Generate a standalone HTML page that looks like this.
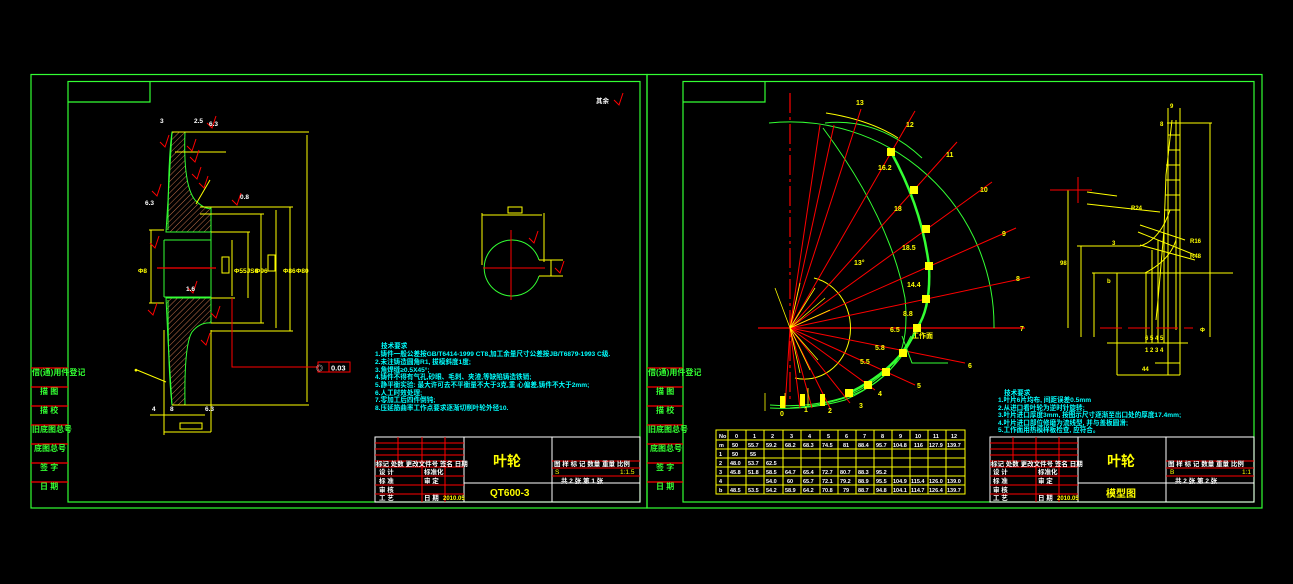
<!DOCTYPE html>
<html><head><meta charset="utf-8"><style>
html,body{margin:0;padding:0;background:#000;width:1293px;height:584px;overflow:hidden}
svg{display:block}
text{font-family:"Liberation Sans","Noto Sans CJK SC",sans-serif}
</style></head><body>
<svg width="1293" height="584" viewBox="0 0 1293 584" xmlns="http://www.w3.org/2000/svg">
<defs>
<pattern id="h" width="4" height="4" patternUnits="userSpaceOnUse" patternTransform="rotate(45)"><line x1="0" y1="0" x2="0" y2="4" stroke="#c0704a" stroke-width="1"/></pattern>
</defs>
<rect width="1293" height="584" fill="#000"/>
<g fill="none" stroke="#3f3" stroke-width="1.2">
<rect x="31" y="74.5" width="616" height="433.5"/>
<rect x="68" y="81.5" width="572" height="420.5"/>
<polyline points="68,102 150,102 150,81.5"/>
<rect x="647" y="74.5" width="615" height="433.5"/>
<rect x="683" y="81.5" width="571" height="420.5"/>
<polyline points="683,102 765,102 765,81.5"/>
</g>
<g stroke="#f00" stroke-width="1.2">
<line x1="31" y1="368" x2="68" y2="368"/><line x1="31" y1="387" x2="68" y2="387"/><line x1="31" y1="406" x2="68" y2="406"/><line x1="31" y1="425" x2="68" y2="425"/><line x1="31" y1="444" x2="68" y2="444"/><line x1="31" y1="463" x2="68" y2="463"/><line x1="31" y1="482" x2="68" y2="482"/>
<line x1="647" y1="368" x2="683" y2="368"/><line x1="647" y1="387" x2="683" y2="387"/><line x1="647" y1="406" x2="683" y2="406"/><line x1="647" y1="425" x2="683" y2="425"/><line x1="647" y1="444" x2="683" y2="444"/><line x1="647" y1="463" x2="683" y2="463"/><line x1="647" y1="482" x2="683" y2="482"/>
</g>
<g fill="#3f3" font-size="8" font-weight="bold">
<text x="32" y="375">借(通)用件登记</text><text x="40" y="394">描 图</text><text x="40" y="413">描 校</text><text x="32" y="432">旧底图总号</text><text x="34" y="451">底图总号</text><text x="40" y="470">签 字</text><text x="40" y="489">日 期</text>
<text x="648" y="375">借(通)用件登记</text><text x="656" y="394">描 图</text><text x="656" y="413">描 校</text><text x="648" y="432">旧底图总号</text><text x="650" y="451">底图总号</text><text x="656" y="470">签 字</text><text x="656" y="489">日 期</text>
</g>

<path d="M172,132 L185,132 Q183,185 195,200 Q205,210 211,208 L211,232 L166,232 L168,200 Z" fill="url(#h)" stroke="#3f3"/>
<path d="M166,298 L211,298 L211,323 Q200,322 192,332 Q184,345 185,405 L172,405 L168,340 Z" fill="url(#h)" stroke="#3f3"/>
<g fill="none" stroke="#3f3" stroke-width="1">
<line x1="164" y1="240" x2="164" y2="297"/><line x1="211" y1="232" x2="211" y2="298"/>
<line x1="164" y1="240" x2="211" y2="240"/><line x1="164" y1="297" x2="211" y2="297"/>
<path d="M172,132 Q168,160 168,230"/><path d="M172,405 Q168,370 168,300"/>
</g>
<g stroke="#ff0" stroke-width="1" fill="none">
<line x1="172" y1="132" x2="309" y2="132"/><line x1="172" y1="405" x2="309" y2="405"/><line x1="307" y1="135" x2="307" y2="402"/>
<line x1="175" y1="152" x2="226" y2="152"/>
<line x1="200" y1="207" x2="293" y2="207"/><line x1="200" y1="214" x2="264" y2="214"/><line x1="211" y1="232" x2="250" y2="232"/>
<line x1="211" y1="298" x2="235" y2="298"/><line x1="211" y1="323" x2="264" y2="323"/><line x1="211" y1="331" x2="293" y2="331"/>
<line x1="232" y1="240" x2="232" y2="296"/><line x1="248" y1="232" x2="248" y2="298"/><line x1="261" y1="214" x2="261" y2="323"/><line x1="276" y1="210" x2="276" y2="328"/><line x1="290" y1="207" x2="290" y2="331"/>
<line x1="149" y1="230" x2="164" y2="230"/><line x1="149" y1="303" x2="164" y2="303"/><line x1="151" y1="230" x2="151" y2="303"/>
<line x1="164" y1="330" x2="164" y2="435"/><line x1="211" y1="330" x2="211" y2="432"/><line x1="164" y1="432" x2="211" y2="432"/>
<line x1="150" y1="415" x2="205" y2="415"/>
<rect x="180" y="423" width="22" height="6"/>
<rect x="222" y="257" width="7" height="16"/><rect x="268" y="255" width="7" height="16"/>
<line x1="137" y1="370" x2="166" y2="382"/>
<line x1="196" y1="204" x2="210" y2="180"/>
</g>
<line x1="157" y1="268" x2="216" y2="268" stroke="#f00" stroke-width="1.2"/>
<polyline points="232,298 232,367 318,367" fill="none" stroke="#f00"/>
<rect x="318" y="362" width="32" height="10" fill="none" stroke="#f00"/>
<line x1="329" y1="362" x2="329" y2="372" stroke="#f00"/>
<text x="331" y="370.5" fill="#fff" font-size="7.5" font-weight="bold">0.03</text>
<text x="316" y="370.5" fill="#fff" font-size="7">◎</text>
<g stroke="#f00" fill="none" stroke-width="1">
<path d="M160,142 l5,5 l4,-12"/><path d="M187,146 l5,5 l4,-12"/><path d="M190,157 l5,5 l4,-12"/><path d="M192,174 l5,5 l4,-12"/><path d="M199,183 l5,5 l4,-12"/><path d="M152,191 l5,5 l4,-12"/><path d="M232,200 l5,5 l4,-12"/><path d="M150,243 l5,5 l4,-12"/><path d="M188,288 l5,5 l4,-12"/><path d="M148,310 l5,5 l4,-12"/><path d="M211,313 l5,5 l4,-12"/><path d="M201,340 l5,5 l4,-12"/><path d="M207,123 l5,5 l4,-12"/><path d="M614,100 l5,5 l4,-12"/>
<path d="M529,238 l5,5 l4,-12"/><path d="M555,268 l5,5 l4,-12"/>
</g>
<g fill="#fff" font-size="6.5" font-weight="bold">
<text x="160" y="123">3</text><text x="194" y="123">2.5</text><text x="209" y="126">6.3</text><text x="240" y="199">0.8</text><text x="186" y="291">1.6</text><text x="596" y="103">其余</text><text x="145" y="205">6.3</text><text x="205" y="411">6.3</text><text x="152" y="411">4</text><text x="170" y="411">8</text>
</g>
<g fill="#ff0" font-size="6.5" font-weight="bold">
<text x="138" y="273">Φ8</text><text x="234" y="273">Φ55JS6</text><text x="255" y="273">Φ96</text><text x="283" y="273">Φ86</text><text x="296" y="273">Φ80</text>
<text x="134" y="372">●</text>
</g>
<path d="M539,260 A28,28 0 1 0 539,276" fill="none" stroke="#3f3"/>
<polyline points="539,260 551,260 551,276 539,276" fill="none" stroke="#ff0"/>
<line x1="483" y1="268" x2="545" y2="268" stroke="#f00"/><line x1="511" y1="230" x2="511" y2="300" stroke="#f00"/>
<g stroke="#ff0" fill="none"><line x1="482" y1="215" x2="542" y2="215"/><line x1="482" y1="213" x2="482" y2="265"/><line x1="544" y1="213" x2="544" y2="262"/><rect x="508" y="207" width="14" height="6"/><line x1="551" y1="260" x2="563" y2="260"/><line x1="551" y1="276" x2="563" y2="276"/></g>
<g fill="#0ff" font-size="6.6" font-weight="bold">
<text x="381" y="348">技术要求</text>
<text x="375" y="356">1.铸件一般公差按GB/T6414-1999 CT8,加工余量尺寸公差按JB/T6879-1993 C级.</text>
<text x="375" y="364">2.未注铸造圆角R1, 拔模斜度1度;</text>
<text x="375" y="372">3.角焊缝≥0.5X45°;</text>
<text x="375" y="379">4.铸件不得有气孔,砂眼、毛刺、夹渣,等缺陷铸造铁销;</text>
<text x="375" y="387">5.静平衡实验: 最大许可去不平衡量不大于3克,重 心偏差,铸件不大于2mm;</text>
<text x="375" y="395">6.人工时效处理;</text>
<text x="375" y="402">7.零加工后四件倒钝;</text>
<text x="375" y="410">8.压延筋曲率工作点要求逐渐切削叶轮外径10.</text>
</g>
<g fill="none" stroke="#fff" stroke-width="1">
<rect x="375" y="437" width="265" height="65"/><line x1="464" y1="437" x2="464" y2="502"/><line x1="552" y1="437" x2="552" y2="502"/><line x1="464" y1="483" x2="640" y2="483"/>
</g>
<g stroke="#f00" stroke-width="1"><line x1="375" y1="443" x2="464" y2="443"/><line x1="375" y1="449" x2="464" y2="449"/><line x1="375" y1="455" x2="464" y2="455"/><line x1="375" y1="461" x2="464" y2="461"/><line x1="375" y1="467" x2="464" y2="467"/><line x1="375" y1="476" x2="464" y2="476"/><line x1="375" y1="485" x2="464" y2="485"/><line x1="375" y1="494" x2="464" y2="494"/><line x1="398" y1="437" x2="398" y2="461"/><line x1="422" y1="437" x2="422" y2="502"/><line x1="445" y1="437" x2="445" y2="502"/>
<line x1="552" y1="461" x2="640" y2="461"/><line x1="552" y1="468" x2="640" y2="468"/><line x1="552" y1="476" x2="640" y2="476"/></g>
<g fill="#fff" font-size="6.5" font-weight="bold"><text x="376" y="466">标记 处数 更改文件号 签名 日期</text><text x="379" y="474">设 计</text><text x="379" y="483">标 准</text><text x="379" y="492">审 核</text><text x="379" y="500">工 艺</text><text x="424" y="474">标准化</text><text x="424" y="483">审 定</text><text x="424" y="500">日 期</text><text x="554" y="466">图 样 标 记 数量 重量 比例</text><text x="561" y="483">共 2 张   第 1 张</text></g>
<text x="443" y="500" fill="#ff0" font-size="6" font-weight="bold">2010.05</text>
<text x="493" y="466" fill="#ff0" font-size="14" font-weight="bold">叶轮</text>
<text x="490" y="496" fill="#ff0" font-size="10" font-weight="bold">QT600-3</text>
<text x="555" y="474" fill="#ff0" font-size="6.5">S</text><text x="620" y="474" fill="#ff0" font-size="6.5">1:1.5</text>

<g transform="translate(790,328)">
<line x1="-32" y1="0" x2="235" y2="0" stroke="#f00" stroke-width="1.2"/>
<line x1="0" y1="-235" x2="0" y2="75" stroke="#f00" stroke-dasharray="20,4,3,4" stroke-width="1.2"/>
<path d="M204,0 A204,204 0 0 0 -21,-205" fill="none" stroke="#3f3"/>
<path d="M132,-170 A140,175 0 0 0 35,-205" fill="none" stroke="#3f3"/>
<path d="M101,-176 Q132,-120 139,-62 Q141,-20 127,0 Q110,40 59,65" fill="none" stroke="#3f3" stroke-width="2.5"/>
<path d="M33,-200 Q100,-110 115,-30 Q120,20 100,42 Q70,75 0,80" fill="none" stroke="#3f3"/>
<path d="M125,5 Q105,50 55,72 Q20,82 -20,80" fill="none" stroke="#3f3"/>
<path d="M121,8 Q100,52 52,70 Q18,80 -20,77" fill="none" stroke="#3f3"/>
<path d="M36,-215 Q80,-208 108,-190" fill="none" stroke="#ff0"/>
<path d="M24,-50 A45,50 0 0 1 5,50" fill="none" stroke="#ff0"/>
<g stroke="#f00" stroke-width="1">
<line x1="0" y1="0" x2="71" y2="-219"/><line x1="0" y1="0" x2="125" y2="-217"/><line x1="0" y1="0" x2="167" y2="-186"/><line x1="0" y1="0" x2="202" y2="-146"/><line x1="0" y1="0" x2="226" y2="-100"/><line x1="0" y1="0" x2="240" y2="-51"/>
<line x1="0" y1="0" x2="175" y2="35"/><line x1="0" y1="0" x2="125" y2="57"/><line x1="0" y1="0" x2="85" y2="62"/><line x1="0" y1="0" x2="60" y2="75"/>
<line x1="0" y1="0" x2="40" y2="80"/><line x1="0" y1="0" x2="22" y2="80"/><line x1="0" y1="0" x2="10" y2="80"/><line x1="0" y1="0" x2="-5" y2="80"/>
<line x1="0" y1="0" x2="44" y2="-203"/><line x1="0" y1="0" x2="30" y2="-203"/>
</g>
<g stroke="#ff0" stroke-width="0.8"><line x1="0" y1="0" x2="-15" y2="-40"/><line x1="0" y1="0" x2="10" y2="-45"/><line x1="0" y1="0" x2="25" y2="-40"/><line x1="0" y1="0" x2="35" y2="-30"/><line x1="0" y1="0" x2="40" y2="-18"/><line x1="0" y1="0" x2="20" y2="42"/><line x1="0" y1="0" x2="10" y2="45"/><line x1="0" y1="0" x2="28" y2="32"/>
<line x1="-25" y1="65" x2="-25" y2="83"/><line x1="-5" y1="65" x2="-5" y2="80"/><line x1="18" y1="60" x2="18" y2="78"/></g>
<g fill="#ff0">
<rect x="97" y="-180" width="8" height="8"/><rect x="120" y="-142" width="8" height="8"/><rect x="132" y="-103" width="8" height="8"/><rect x="135" y="-66" width="8" height="8"/><rect x="132" y="-33" width="8" height="8"/><rect x="123" y="-4" width="8" height="8"/><rect x="109" y="21" width="8" height="8"/><rect x="92" y="40" width="8" height="8"/><rect x="74" y="53" width="8" height="8"/><rect x="55" y="61" width="8" height="8"/><rect x="-10" y="68" width="5" height="12"/><rect x="10" y="66" width="5" height="12"/><rect x="30" y="66" width="5" height="12"/>
</g>
<polyline points="112,8 122,35 158,35" fill="none" stroke="#3f3"/>
<g fill="#ff0" font-size="7" font-weight="bold">
<text x="66" y="-223">13</text><text x="116" y="-201">12</text><text x="156" y="-171">11</text><text x="190" y="-136">10</text><text x="212" y="-92">9</text><text x="226" y="-47">8</text><text x="230" y="3">7</text><text x="178" y="40">6</text><text x="127" y="60">5</text><text x="88" y="68">4</text><text x="69" y="80">3</text><text x="38" y="85">2</text><text x="14" y="84">1</text><text x="-10" y="88">0</text>
<text x="64" y="-63">13°</text><text x="122" y="10">工作面</text>
<text x="88" y="-158">16.2</text><text x="104" y="-117">18</text><text x="112" y="-78">18.5</text><text x="117" y="-41">14.4</text><text x="113" y="-12">8.8</text><text x="100" y="4">6.5</text><text x="85" y="22">5.8</text><text x="70" y="36">5.5</text>
</g>
</g>
<g fill="none" stroke="#ff0" stroke-width="1">
<rect x="716" y="430" width="249" height="64"/>
<line x1="716" y1="440" x2="965" y2="440"/><line x1="716" y1="449" x2="965" y2="449"/><line x1="716" y1="458" x2="965" y2="458"/><line x1="716" y1="467" x2="965" y2="467"/><line x1="716" y1="476" x2="965" y2="476"/><line x1="716" y1="485" x2="965" y2="485"/>
<line x1="728" y1="430" x2="728" y2="494"/><line x1="746" y1="430" x2="746" y2="494"/><line x1="764" y1="430" x2="764" y2="494"/><line x1="783" y1="430" x2="783" y2="494"/><line x1="801" y1="430" x2="801" y2="494"/><line x1="820" y1="430" x2="820" y2="494"/><line x1="838" y1="430" x2="838" y2="494"/><line x1="856" y1="430" x2="856" y2="494"/><line x1="874" y1="430" x2="874" y2="494"/><line x1="892" y1="430" x2="892" y2="494"/><line x1="910" y1="430" x2="910" y2="494"/><line x1="928" y1="430" x2="928" y2="494"/><line x1="946" y1="430" x2="946" y2="494"/>
</g>
<g fill="#fff" font-size="5.5" font-weight="bold">
<text x="719" y="438">No</text><text x="735" y="438">0</text><text x="753" y="438">1</text><text x="771" y="438">2</text><text x="790" y="438">3</text><text x="808" y="438">4</text><text x="827" y="438">5</text><text x="845" y="438">6</text><text x="863" y="438">7</text><text x="881" y="438">8</text><text x="899" y="438">9</text><text x="915" y="438">10</text><text x="933" y="438">11</text><text x="951" y="438">12</text>
<text x="719" y="447">m</text><text x="732" y="447">50</text><text x="748" y="447">55.7</text><text x="766" y="447">59.2</text><text x="785" y="447">68.2</text><text x="803" y="447">68.3</text><text x="822" y="447">74.5</text><text x="843" y="447">81</text><text x="858" y="447">88.4</text><text x="876" y="447">95.7</text><text x="893" y="447">104.8</text><text x="914" y="447">116</text><text x="929" y="447">127.9</text><text x="947" y="447">139.7</text>
<text x="719" y="456">1</text><text x="732" y="456">50</text><text x="750" y="456">55</text>
<text x="719" y="465">2</text><text x="730" y="465">48.0</text><text x="748" y="465">53.7</text><text x="766" y="465">62.5</text>
<text x="719" y="474">3</text><text x="730" y="474">45.8</text><text x="748" y="474">51.8</text><text x="766" y="474">58.5</text><text x="785" y="474">64.7</text><text x="803" y="474">65.4</text><text x="822" y="474">72.7</text><text x="840" y="474">80.7</text><text x="858" y="474">88.3</text><text x="876" y="474">95.2</text>
<text x="719" y="483">4</text><text x="766" y="483">54.0</text><text x="787" y="483">60</text><text x="803" y="483">65.7</text><text x="822" y="483">72.1</text><text x="840" y="483">79.2</text><text x="858" y="483">88.9</text><text x="876" y="483">95.5</text><text x="893" y="483">104.9</text><text x="911" y="483">115.4</text><text x="929" y="483">126.0</text><text x="947" y="483">139.0</text>
<text x="719" y="492">b</text><text x="730" y="492">48.5</text><text x="748" y="492">53.5</text><text x="766" y="492">54.2</text><text x="785" y="492">58.9</text><text x="803" y="492">64.2</text><text x="822" y="492">70.8</text><text x="843" y="492">79</text><text x="858" y="492">88.7</text><text x="876" y="492">94.8</text><text x="893" y="492">104.1</text><text x="911" y="492">114.7</text><text x="929" y="492">126.4</text><text x="947" y="492">139.7</text>
</g>
<g fill="#0ff" font-size="6.6" font-weight="bold">
<text x="1004" y="395">技术要求</text>
<text x="998" y="402">1.叶片6片均布, 间距误差0.5mm</text>
<text x="998" y="410">2.从进口看叶轮为逆时针旋转;</text>
<text x="998" y="417">3.叶片进口厚度3mm, 按图示尺寸逐渐至出口处的厚度17.4mm;</text>
<text x="998" y="425">4.叶片进口部位修磨为流线型, 并与盖板圆滑;</text>
<text x="998" y="432">5.工作面用热模样板检查, 应符合。</text>
</g>
<g fill="none" stroke="#fff" stroke-width="1">
<rect x="990" y="437" width="264" height="65"/><line x1="1078" y1="437" x2="1078" y2="502"/><line x1="1166" y1="437" x2="1166" y2="502"/><line x1="1078" y1="483" x2="1254" y2="483"/>
</g>
<g stroke="#f00" stroke-width="1"><line x1="990" y1="443" x2="1078" y2="443"/><line x1="990" y1="449" x2="1078" y2="449"/><line x1="990" y1="455" x2="1078" y2="455"/><line x1="990" y1="461" x2="1078" y2="461"/><line x1="990" y1="467" x2="1078" y2="467"/><line x1="990" y1="476" x2="1078" y2="476"/><line x1="990" y1="485" x2="1078" y2="485"/><line x1="990" y1="494" x2="1078" y2="494"/><line x1="1013" y1="437" x2="1013" y2="461"/><line x1="1036" y1="437" x2="1036" y2="502"/><line x1="1059" y1="437" x2="1059" y2="502"/>
<line x1="1166" y1="461" x2="1254" y2="461"/><line x1="1166" y1="468" x2="1254" y2="468"/><line x1="1166" y1="476" x2="1254" y2="476"/></g>
<g fill="#fff" font-size="6.5" font-weight="bold"><text x="991" y="466">标记 处数 更改文件号 签名 日期</text><text x="993" y="474">设 计</text><text x="993" y="483">标 准</text><text x="993" y="492">审 核</text><text x="993" y="500">工 艺</text><text x="1038" y="474">标准化</text><text x="1038" y="483">审 定</text><text x="1038" y="500">日 期</text><text x="1168" y="466">图 样 标 记 数量 重量 比例</text><text x="1175" y="483">共 2 张   第 2 张</text></g>
<text x="1057" y="500" fill="#ff0" font-size="6" font-weight="bold">2010.05</text>
<text x="1107" y="466" fill="#ff0" font-size="14" font-weight="bold">叶轮</text>
<text x="1106" y="497" fill="#ff0" font-size="10" font-weight="bold">模型图</text>
<text x="1170" y="474" fill="#ff0" font-size="6.5">B</text><text x="1242" y="474" fill="#ff0" font-size="6.5">1:1</text>

<g stroke="#ff0" stroke-width="1" fill="none">
<line x1="1168" y1="108" x2="1168" y2="375"/><line x1="1180" y1="108" x2="1180" y2="375"/>
<path d="M1172,120 L1166,175 L1164,230 L1158,300 L1156,320"/><line x1="1176" y1="120" x2="1176" y2="330"/>
<line x1="1167" y1="123" x2="1212" y2="123"/><line x1="1210" y1="123" x2="1210" y2="337"/>
<line x1="1077" y1="246" x2="1140" y2="246"/><line x1="1092" y1="273" x2="1233" y2="273"/>
<line x1="1068" y1="190" x2="1068" y2="328"/><line x1="1081" y1="246" x2="1081" y2="337"/><line x1="1094" y1="273" x2="1094" y2="337"/>
<line x1="1117" y1="273" x2="1117" y2="375"/>
<line x1="1107" y1="343" x2="1188" y2="343"/><line x1="1155" y1="363" x2="1180" y2="363"/><line x1="1117" y1="375" x2="1180" y2="375"/>
<line x1="1087" y1="192" x2="1117" y2="196"/><line x1="1087" y1="204" x2="1160" y2="212"/>
<path d="M1140,246 Q1160,240 1170,210"/><path d="M1145,273 Q1170,260 1176,240"/>
<line x1="1140" y1="225" x2="1185" y2="240"/><line x1="1138" y1="232" x2="1195" y2="255"/><line x1="1140" y1="245" x2="1195" y2="260"/>
<line x1="1168" y1="135" x2="1180" y2="135"/><line x1="1168" y1="150" x2="1180" y2="150"/><line x1="1166" y1="165" x2="1180" y2="165"/><line x1="1166" y1="180" x2="1180" y2="180"/><line x1="1165" y1="195" x2="1180" y2="195"/><line x1="1164" y1="210" x2="1180" y2="210"/>
<line x1="1146" y1="273" x2="1146" y2="343"/><line x1="1152" y1="250" x2="1152" y2="343"/><line x1="1158" y1="240" x2="1158" y2="343"/><line x1="1164" y1="230" x2="1164" y2="343"/>
</g>
<line x1="1100" y1="328" x2="1193" y2="328" stroke="#f00" stroke-dasharray="22,6"/>
<line x1="1050" y1="190" x2="1092" y2="190" stroke="#f00"/><line x1="1078" y1="177" x2="1078" y2="203" stroke="#f00"/>
<g fill="#ff0" font-size="6" font-weight="bold"><text x="1131" y="210">R24</text><text x="1190" y="243">R16</text><text x="1190" y="258">R48</text><text x="1112" y="245">3</text><text x="1107" y="283">b</text><text x="1060" y="265">98</text><text x="1145" y="352">1 2 3 4</text><text x="1145" y="340">6 5 4 5</text><text x="1142" y="371">44</text><text x="1170" y="108">9</text><text x="1160" y="126">8</text><text x="1200" y="332">Φ</text></g>
</svg>
</body></html>
